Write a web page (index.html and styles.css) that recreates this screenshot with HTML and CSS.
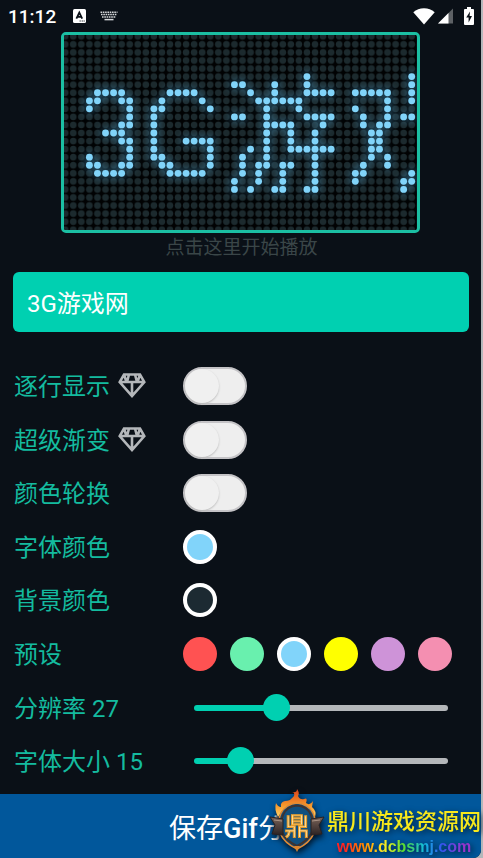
FILE: index.html
```html
<!DOCTYPE html>
<html lang="zh-CN">
<head>
	<meta charset="UTF-8">
	<meta name="viewport" content="width=device-width, initial-scale=1">
	<link rel="stylesheet" href="styles.css">
	<title>LED滚动字幕</title>
</head>
<body>
<div class="main">
	<div class="statusBar">
		<span class="time">11:12</span>
		<svg class="icoA" width="14" height="14" viewBox="0 0 14 14">
			<rect width="13" height="14" rx="1.5" fill="#fff"/>
			<path d="M3.4 9.6L6.3 3.6L9.2 9.6M4.6 7.8H8" fill="none" stroke="#0a1017" stroke-width="1.8"/>
			<path d="M6.6 12H7.7M8.7 12H9.8M10.6 12H11.7" stroke="#0a1017" stroke-width="1"/>
		</svg>
		<svg class="icoKey" width="18" height="10" viewBox="0 0 18 10">
			<g stroke="#d5d8da" stroke-width="1.5" fill="none">
				<path d="M0.5 1.2H17.5" stroke-dasharray="1.6 0.7"/>
				<path d="M1 3.6H17" stroke-dasharray="1.6 0.7"/>
				<path d="M2 6H16" stroke-dasharray="1.6 0.7"/>
				<path d="M4.5 8.6H13.5"/>
			</g>
		</svg>
		<span class="space"></span>
		<svg class="icoWifi" width="22" height="17" viewBox="0 0 22 17">
			<path d="M11 16.5L0.3 4.2Q4.8 0.3 11 0.3T21.7 4.2Z" fill="#fff"/>
		</svg>
		<svg class="icoSignal" width="15" height="16" viewBox="0 0 15 16">
			<path d="M0 15.5L15 0.5V15.5Z" fill="#5d6165"/>
			<path d="M0 15.5L10.5 5V15.5Z" fill="#fff"/>
		</svg>
		<svg class="icoBattery" width="10" height="18" viewBox="0 0 10 18">
			<path d="M3 0H7V2H9Q10 2 10 3V17Q10 18 9 18H1Q0 18 0 17V3Q0 2 1 2H3Z" fill="#fff"/>
			<path d="M6 4.5L2.2 10.5H4.6V15.5L8 9H5.6Z" fill="#0a1017"/>
		</svg>
	</div>
	<div class="screen">
		<svg id="board" viewBox="0 0 352 195">
			<defs>
				<pattern id="off" width="8.05" height="8.05" x="-2.8" y="-2.7" patternUnits="userSpaceOnUse">
					<circle cx="4.02" cy="4.02" r="3.3" fill="#1c2a2e"/>
				</pattern>
				<filter id="glow" x="-10%" y="-10%" width="120%" height="120%">
					<feGaussianBlur stdDeviation="4"/>
				</filter>
			</defs>
			<rect width="352" height="195" fill="#010203"/>
			<rect width="352" height="195" fill="url(#off)"/>
			<g id="halo" fill="#4a9ac4" opacity="0.5" filter="url(#glow)"></g>
			<g id="lit" fill="#81d4fa"></g>
		</svg>
	</div>
	<p class="tip">点击这里开始播放</p>
	<input class="words" type="text" value="3G游戏网" aria-label="文字">
	<div class="options">
		<label for="byLine">逐行显示
			<svg class="gem" width="28" height="25" viewBox="0 0 28 25"><path d="M6 1.5H22L26.3 9L14 23L1.7 9ZM1.7 9H26.3M14 9V22M6 1.5L8.5 9M11 1.5L9 9M17 1.5L19 9M22 1.5L19.5 9"/></svg>
		</label>
		<div class="cell"><input id="byLine" class="toggle" type="checkbox"></div>
		<label for="superFade">超级渐变
			<svg class="gem" width="28" height="25" viewBox="0 0 28 25"><path d="M6 1.5H22L26.3 9L14 23L1.7 9ZM1.7 9H26.3M14 9V22M6 1.5L8.5 9M11 1.5L9 9M17 1.5L19 9M22 1.5L19.5 9"/></svg>
		</label>
		<div class="cell"><input id="superFade" class="toggle" type="checkbox"></div>
		<label for="colorTurn">颜色轮换</label>
		<div class="cell"><input id="colorTurn" class="toggle" type="checkbox"></div>
		<label for="fontColor">字体颜色</label>
		<div class="cell"><button id="fontColor" class="dot blue on" type="button"></button></div>
		<label for="backColor">背景颜色</label>
		<div class="cell"><button id="backColor" class="dot dark on" type="button"></button></div>
		<span class="name">预设</span>
		<div class="cell">
			<button class="dot red" type="button" aria-label="红"></button>
			<button class="dot green" type="button" aria-label="绿"></button>
			<button class="dot blue on" type="button" aria-label="蓝"></button>
			<button class="dot yellow" type="button" aria-label="黄"></button>
			<button class="dot purple" type="button" aria-label="紫"></button>
			<button class="dot pink" type="button" aria-label="粉"></button>
		</div>
		<label for="ratio">分辨率 27</label>
		<div class="cell"><input id="ratio" class="range" type="range" min="10" max="66" value="27" style="--pos:32%"></div>
		<label for="fontSize">字体大小 15</label>
		<div class="cell"><input id="fontSize" class="range" type="range" min="8" max="56" value="15" style="--pos:18%"></div>
	</div>
	<div class="footer">
		<button class="save" type="button">保存<b>Gif</b>分享</button>
		<div class="mark">
			<svg class="badge" width="54" height="64" viewBox="0 0 54 64">
				<defs>
					<linearGradient id="fire" x1="0" y1="0" x2="0" y2="1">
						<stop offset="0" stop-color="#d8401c"/>
						<stop offset="0.6" stop-color="#f79a2c"/>
						<stop offset="1" stop-color="#ffd36b"/>
					</linearGradient>
					<linearGradient id="band" x1="0" y1="0" x2="0" y2="1">
						<stop offset="0" stop-color="#7a6358"/>
						<stop offset="1" stop-color="#2b2223"/>
					</linearGradient>
				</defs>
				<path d="M8 28Q4 20 6 14Q8 18 11 18Q10 13 15 12Q20 12 22 9Q25 7 24 4L22 3Q27 4 27 0Q30 4 28 7Q30 11 34 10Q38 8 36 14Q40 17 43 12L42 18Q47 22 45 28Q38 16 27 15Q15 15 8 28Z" fill="url(#fire)"/>
				<path d="M27 14Q38 15 43 24Q47 32 44 44Q40 54 27 60Q14 54 10 44Q7 32 11 24Q16 15 27 14Z" fill="#11507f" stroke="#e08a35" stroke-width="1.6"/>
				<path d="M27 16.500Q37 17 41 26Q44 33 42 43Q38 52 27 57Q16 52 12 43Q10 33 13 26Q17 17 27 16.500Z" fill="none" stroke="#3d3332" stroke-width="2"/>
				<path d="M0 28L13 30V46L2 45L5 36ZM54 28L41 30V46L52 45L49 36Z" fill="url(#band)" stroke="#292223"/>
				<path d="M4 31L12 32M42 32L50 31" stroke="#aa9385"/>
				<text x="27" y="46" text-anchor="middle">鼎</text>
				<path d="M24 57L27 63L30 57" fill="#d8842f"/>
			</svg>
			<div class="site">
				<span class="siteName">鼎川游戏资源网</span>
				<span class="siteUrl">www.dcbsmj.com</span>
			</div>
		</div>
	</div>
</div>
<script src="board.js"></script>
</body>
</html>
```
FILE: styles.css
```css
*{
	box-sizing: border-box;
}
body,p{
	margin: 0;
	padding: 0;
}
body{
	background: #b4b7ba;
	font-family: Roboto, "Noto Sans CJK SC", sans-serif;
}
button,input{
	margin: 0;
	padding: 0;
	border: 0;
	font-family: inherit;
}
.main{
	display: flex;
	flex-direction: column;
	min-height: 100vh;
	margin-right: 2px;
	background: #0a1017;
	border-bottom-right-radius: 8px;
}
.statusBar{
	display: flex;
	align-items: center;
	height: 32px;
	padding: 0 7px 0 8px;
	color: #fff;
}
.time{
	padding-top: 2px;
	font-size: 19px;
	font-weight: 500;
	line-height: 30px;
}
.icoA{
	margin-left: 17px;
}
.icoKey{
	margin-left: 13px;
}
.space{
	flex: 1;
}
.icoSignal{
	margin-left: 3px;
}
.icoBattery{
	margin-left: 11px;
}
.screen{
	align-self: center;
	width: 74.5%;
	border: #1bbfa3 3px solid;
	border-radius: 5px;
	overflow: hidden;
}
#board{
	display: block;
	width: 100%;
}
.tip{
	padding: 2px 0 0 2px;
	font-size: 19px;
	line-height: 26px;
	text-align: center;
	color: #3a4648;
}
.words{
	height: 60px;
	margin: 11px 12px 0 13px;
	padding: 0 14px 2px;
	border-radius: 6px;
	background: #00d0b1;
	color: #fff;
	font-size: 24px;
}
.options{
	flex: 1;
	display: grid;
	grid-template-columns: 169px 1fr;
	grid-auto-rows: 1fr;
	align-items: center;
	padding: 27px 12px 6px 14px;
	color: #14bb9f;
	font-size: 24px;
	line-height: 32px;
}
.options label,.name{
	display: flex;
	align-items: center;
	gap: 8px;
	padding-top: 2px;
}
.gem{
	margin-top: -2px;
	fill: none;
	stroke: #b4b7ba;
	stroke-width: 2.6;
}
.cell{
	display: flex;
	align-items: center;
	gap: 13px;
}
.toggle{
	-webkit-appearance: none;
	appearance: none;
	display: flex;
	width: 64px;
	height: 38px;
	border: #c4c3c6 2px solid;
	border-radius: 19px;
	background: #eee;
}
.toggle:before{
	content: "";
	width: 34px;
	height: 34px;
	border-radius: 50%;
	background: #f0f0f0;
	box-shadow: 0 1px 2px #bbb;
}
.toggle:checked{
	justify-content: flex-end;
	background: #00d0b1;
}
.dot{
	width: 34px;
	height: 34px;
	border-radius: 50%;
}
.on{
	border: #fff 4px solid;
}
.red{
	background: #ff5252;
}
.green{
	background: #69f0ae;
}
.blue{
	background: #81d4fa;
}
.dark{
	background: #1c2a32;
}
.yellow{
	background: #ff0;
}
.purple{
	background: #ce93d8;
}
.pink{
	background: #f48fb1;
}
.range{
	-webkit-appearance: none;
	appearance: none;
	flex: 1;
	height: 27px;
	margin: 0 21px 0 11px;
	background: none;
}
.range::-webkit-slider-runnable-track{
	height: 6px;
	border-radius: 3px;
	background: linear-gradient(to right, #00d0b1 var(--pos), #b4b7ba var(--pos));
}
.range::-webkit-slider-thumb{
	-webkit-appearance: none;
	width: 27px;
	height: 27px;
	margin-top: -11px;
	border-radius: 50%;
	background: #00d0b1;
}
.footer{
	position: relative;
}
.save{
	display: block;
	width: 100%;
	height: 64px;
	border-bottom-right-radius: 8px;
	background: #01579b;
	color: #fff;
	font-size: 27px;
}
.save b{
	font-weight: 500;
}
/* 右下角水印 */
.mark{
	position: absolute;
	right: 0;
	bottom: 0;
	display: flex;
	align-items: flex-end;
	gap: 3px;
	pointer-events: none;
}
.badge{
	margin-bottom: 5px;
	overflow: visible;
	filter: drop-shadow(1px 3px 3px #012);
}
.badge text{
	font-family: "Noto Sans CJK SC", sans-serif;
	font-size: 25px;
	font-weight: 400;
	fill: #fff0c0;
	stroke: #e79a25;
	stroke-width: 1px;
}
.site{
	display: flex;
	flex-direction: column;
	align-items: center;
	filter: drop-shadow(2px 2px 3px #001a33);
}
.siteName{
	font-size: 22px;
	font-weight: 500;
	line-height: 28px;
	color: #f7e81c;
}
.siteUrl{
	font-family: "Liberation Sans", sans-serif;
	font-size: 16px;
	font-weight: 700;
	line-height: 22px;
	color: transparent;
	background: linear-gradient(to right, #f22 5%, #f80 20%, #fe2 35%, #5d3 50%, #1bd 65%, #35e 78%, #93c 95%);
	-webkit-background-clip: text;
	background-clip: text;
}
```
FILE: board.js
```js
//每行亮灯的列号，从第5行开始
var rows=[
	[30,43],
	[21,22,26,30,43],
	[4,5,6,7,13,14,15,16,23,26,30,31,32,33,36,37,38,39,40,43],
	[3,4,7,8,12,17,24,25,26,27,28,29,40,43],
	[3,8,11,12,18,25,29,36,40],
	[8,11,21,22,25,30,31,32,33,37,40,42,43],
	[7,8,11,25,26,27,28,32,37,39,40],
	[5,6,7,11,25,28,31,38,39],
	[7,8,11,15,16,17,18,25,28,31,38,39],
	[8,11,18,23,25,28,29,30,31,32,33,38,39],
	[3,8,11,12,18,22,25,31,38,40],
	[3,4,7,8,12,13,18,22,24,25,27,28,31,37,40],
	[4,5,6,7,13,14,15,16,17,22,24,27,31,36,37,43],
	[21,24,27,31,36,42,43],
	[21,23,26,27,30,31,42]
];
var lit=document.getElementById("lit");
var halo=document.getElementById("halo");
function addDot(parent,x,y,r){
	var dot=document.createElementNS("http://www.w3.org/2000/svg","circle");
	dot.setAttribute("cx",x);
	dot.setAttribute("cy",y);
	dot.setAttribute("r",r);
	parent.appendChild(dot);
}
for (var i = 0; i < rows.length; i++) {
	for (var j = 0; j < rows[i].length; j++) {
		var x=1.22+rows[i][j]*8.05;
		var y=1.32+(i+5)*8.05;
		addDot(lit,x,y,3.4);
		addDot(halo,x,y,5);
	}
}
```
